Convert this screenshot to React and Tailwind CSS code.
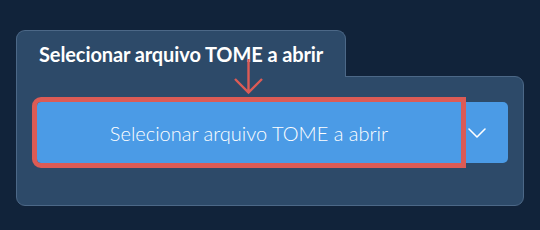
import { ChevronDown } from "lucide-react";

function App() {
	return (
		<div
			className="relative w-[540px] h-[230px] bg-[#11233a] pt-[30px] pl-[16px] overflow-hidden"
			style={{ fontFamily: "Lato, 'Noto Sans', sans-serif" }}
		>
			<div className="w-[508px]">
				{/* tab */}
				<div className="relative z-10 -mb-px w-[330px] h-[47px] rounded-t-[9px] border border-b-0 border-[#4c6887] bg-[#2d4a69] pl-[22px] pt-[11px]">
					<h2 className="text-[20px] font-bold text-white leading-[24px] tracking-[-0.1px]">
						Selecionar arquivo TOME a abrir
					</h2>
				</div>
				{/* panel */}
				<div className="h-[130px] rounded-b-[9px] rounded-tr-[9px] border border-[#4c6887] bg-[#2d4a69] pl-[20px] pt-[25px]">
					<div className="flex h-[61px] w-[471px]">
						<button className="w-[424px] h-full rounded-l-[4px] bg-[#4b9be6] text-white text-[20px] font-light outline-[5px] outline-solid outline-[#dc5b55] relative z-10">
							Selecionar arquivo TOME a abrir
						</button>
						<button className="flex-1 h-full rounded-r-[5px] bg-[#4b9be6] text-white flex items-center">
							<ChevronDown size={32} strokeWidth={1.2} />
						</button>
					</div>
				</div>
			</div>
			{/* annotation arrow */}
			<svg
				className="absolute left-[230px] top-[56px] z-20"
				width="38"
				height="42"
				viewBox="0 0 38 42"
				fill="none"
			>
				<path
					d="M18.5 3 V36 M5 23 L18.5 36.5 L32 23"
					stroke="#dc5b55"
					strokeWidth="2.4"
				/>
			</svg>
		</div>
	);
}

export default App;
